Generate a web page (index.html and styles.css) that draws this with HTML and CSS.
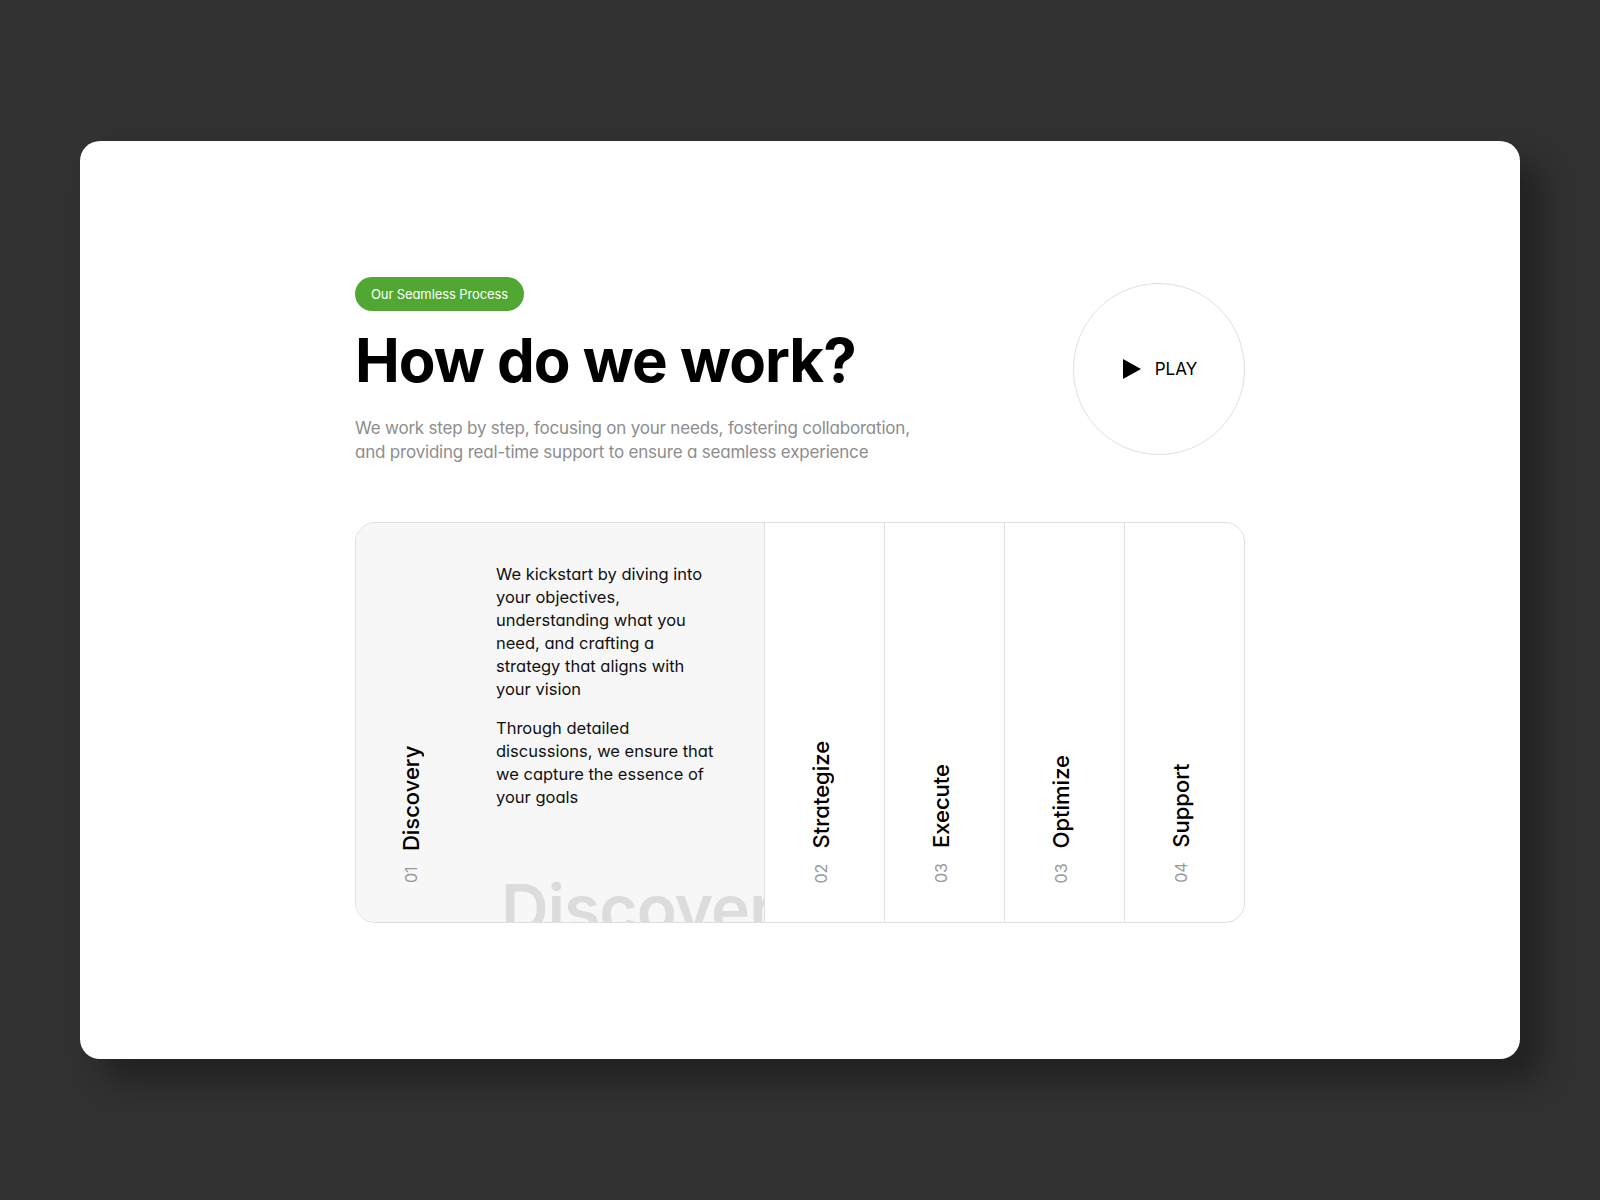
FILE: index.html
```html
<!DOCTYPE html>
<html lang="en">
<head>
<meta charset="utf-8">
<title>How do we work?</title>
<link rel="stylesheet" href="styles.css">
</head>
<body>
<main class="card">
  <div class="content">
    <header class="intro">
      <div class="intro-text">
        <span class="badge">Our Seamless Process</span>
        <h1 class="title">How do we work?</h1>
        <p class="lead">We work step by step, focusing on your needs, fostering collaboration,<br>and providing real-time support to ensure a seamless experience</p>
      </div>
      <button class="play" type="button">
        <svg class="play-icon" width="18" height="20" viewBox="0 0 18 20" aria-hidden="true"><path d="M0 0 L18 10 L0 20 Z" fill="#000"/></svg>
        <span>PLAY</span>
      </button>
    </header>
    <section class="steps">
      <div class="step step-active">
        <div class="step-label"><span class="num">01</span><span class="name">Discovery</span></div>
        <div class="step-body">
          <p>We kickstart by diving into your objectives, understanding what you need, and crafting a strategy that aligns with your vision</p>
          <p>Through detailed discussions, we ensure that we capture the essence of your goals</p>
        </div>
        <div class="ghost" aria-hidden="true">Discovery</div>
      </div>
      <div class="step">
        <div class="step-label"><span class="num">02</span><span class="name">Strategize</span></div>
      </div>
      <div class="step">
        <div class="step-label"><span class="num">03</span><span class="name">Execute</span></div>
      </div>
      <div class="step">
        <div class="step-label"><span class="num">03</span><span class="name">Optimize</span></div>
      </div>
      <div class="step">
        <div class="step-label"><span class="num">04</span><span class="name">Support</span></div>
      </div>
    </section>
  </div>
</main>
</body>
</html>
```

FILE: styles.css
```css
* { box-sizing: border-box; }

html, body {
  margin: 0;
  padding: 0;
}

body {
  background: #313131;
  font-family: "Inter", "Lato", "Liberation Sans", sans-serif;
  font-feature-settings: "cv11" 1;
  color: #0a0a0a;
  padding: 141px 80px 0;
  min-height: 1200px;
}

.card {
  width: 1440px;
  height: 918px;
  background: #ffffff;
  border-radius: 20px;
  box-shadow: 22px 22px 30px rgba(0, 0, 0, 0.32);
  padding-top: 136px;
}

.content {
  width: 890px;
  margin: 0 auto;
}

.intro {
  display: flex;
  justify-content: space-between;
  align-items: center;
}

.intro-text {
  display: flex;
  flex-direction: column;
  align-items: flex-start;
}

.badge {
  display: inline-block;
  height: 34px;
  line-height: 34px;
  padding: 0 16px;
  border-radius: 17px;
  background: #50a833;
  color: #ffffff;
  font-size: 13px;
  letter-spacing: -0.1px;
}

.title {
  margin: 13px 0 0;
  font-size: 60px;
  line-height: 72px;
  font-weight: 700;
  letter-spacing: -1px;
  color: #000;
}

.lead {
  margin: 21px 0 0;
  font-size: 17px;
  line-height: 23.5px;
  color: #8d8d8d;
  letter-spacing: -0.2px;
}

.play {
  width: 172px;
  height: 172px;
  border-radius: 50%;
  border: 1px solid #e0e0e0;
  background: #fff;
  display: flex;
  align-items: center;
  justify-content: center;
  gap: 14px;
  padding: 0 0 0 2px;
  margin-top: -3px;
  font-family: inherit;
  font-size: 17px;
  color: #000;
  cursor: pointer;
}

.play-icon { display: block; }

.steps {
  margin-top: 58px;
  height: 401px;
  display: flex;
  border: 1px solid #e0e0e0;
  border-radius: 20px;
  overflow: hidden;
}

.step {
  width: 120px;
  flex: none;
  border-left: 1px solid #e0e0e0;
  display: flex;
  justify-content: center;
  align-items: flex-end;
  padding-bottom: 39px;
}

.step-active {
  position: relative;
  width: 408px;
  border-left: none;
  background: #f7f7f7;
  justify-content: flex-start;
  align-items: stretch;
  padding-bottom: 0;
  overflow: hidden;
}

.step-label {
  writing-mode: vertical-rl;
  transform: rotate(180deg);
  line-height: 24px;
  white-space: nowrap;
  margin-right: 7px;
}

.step-active .step-label {
  width: 110px;
  flex: none;
  display: flex;
  flex-direction: row;
  justify-content: flex-start;
  align-items: center;
  align-self: flex-end;
  padding: 39px 0 0 0;
  margin-right: 0;
}

.num {
  font-size: 16px;
  color: #999999;
  font-weight: 400;
}

.name {
  font-size: 22px;
  color: #000;
  margin-top: 15px;
  font-weight: 500;
}

.step-body {
  width: 298px;
  flex: none;
  padding: 40px 48px 0 30px;
  font-size: 16.5px;
  line-height: 23px;
  color: #111;
  position: relative;
  z-index: 1;
}

.step-body p {
  margin: 0 0 16px;
}

.ghost {
  position: absolute;
  left: 145px;
  top: 352px;
  font-size: 66px;
  line-height: 1;
  font-weight: 600;
  color: #dcdcdc;
  white-space: nowrap;
  letter-spacing: -1px;
}
```
